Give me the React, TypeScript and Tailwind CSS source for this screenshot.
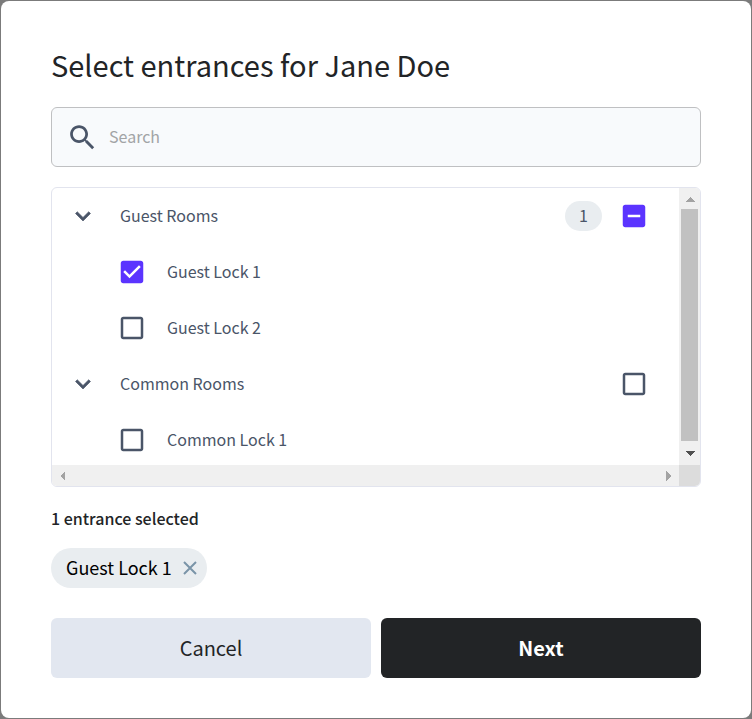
import React, { useState } from 'react';

interface Lock {
  id: string;
  name: string;
}

interface Group {
  id: string;
  name: string;
  locks: Lock[];
}

type CheckState = 'on' | 'off' | 'mixed';

const groups: Group[] = [
  {
    id: 'guest',
    name: 'Guest Rooms',
    locks: [
      { id: 'guest-1', name: 'Guest Lock 1' },
      { id: 'guest-2', name: 'Guest Lock 2' },
    ],
  },
  {
    id: 'common',
    name: 'Common Rooms',
    locks: [{ id: 'common-1', name: 'Common Lock 1' }],
  },
];

const checkPaths: Record<CheckState, string> = {
  on: 'M19 3H5c-1.11 0-2 .9-2 2v14c0 1.1.89 2 2 2h14c1.11 0 2-.9 2-2V5c0-1.1-.89-2-2-2zm-9 14l-5-5 1.41-1.41L10 14.17l7.59-7.59L19 8l-9 9z',
  off: 'M19 5v14H5V5h14m0-2H5c-1.1 0-2 .9-2 2v14c0 1.1.9 2 2 2h14c1.1 0 2-.9 2-2V5c0-1.1-.9-2-2-2z',
  mixed: 'M19 3H5c-1.1 0-2 .9-2 2v14c0 1.1.9 2 2 2h14c1.1 0 2-.9 2-2V5c0-1.1-.9-2-2-2zm-2 10H7v-2h10v2z',
};

const Checkbox: React.FC<{ id: string; label?: string; state: CheckState; onChange: () => void }> = ({ id, label, state, onChange }) => (
  <span className="relative block size-[30px] shrink-0">
    <input
      id={id}
      type="checkbox"
      aria-label={label}
      checked={state === 'on'}
      ref={el => {
        if (el) el.indeterminate = state === 'mixed';
      }}
      onChange={onChange}
      className="absolute inset-0 size-full cursor-pointer opacity-0"
    />
    <svg viewBox="0 0 24 24" className={state === 'off' ? 'pointer-events-none size-full fill-[#4a5568]' : 'pointer-events-none size-full fill-[#5b34ff]'}>
      <path d={checkPaths[state]} />
    </svg>
  </span>
);

const Arrow: React.FC<{ points: string; className: string }> = ({ points, className }) => (
  <svg viewBox="0 0 10 10" className={className} shapeRendering="crispEdges">
    <polygon points={points} />
  </svg>
);

const App: React.FC = () => {
  const [query, setQuery] = useState('');
  const [selected, setSelected] = useState<string[]>(['guest-1']);
  const [closed, setClosed] = useState<string[]>([]);

  const toggle = (list: string[], id: string) => (list.includes(id) ? list.filter(x => x !== id) : [...list, id]);

  const toggleGroup = (group: Group) => {
    const ids = group.locks.map(l => l.id);
    const rest = selected.filter(id => !ids.includes(id));
    setSelected(ids.every(id => selected.includes(id)) ? rest : [...rest, ...ids]);
  };

  const chips = groups.flatMap(g => g.locks).filter(l => selected.includes(l.id));

  return (
    <div className="min-h-screen bg-[#7b7b7b] p-px font-['Noto_Sans_CJK_SC','Noto_Sans',sans-serif] text-[#222426]">
      <main className="rounded-lg bg-white px-[50px] pt-10 pb-10">
        <h1 className="mb-5 text-[29px] leading-[46px]">Select entrances for Jane Doe</h1>

        <label className="mb-5 flex h-[60px] items-center gap-2.5 rounded-md border border-[#bfc0c2] bg-[#f8fafc] px-3.5">
          <svg viewBox="0 0 24 24" className="size-[33px] shrink-0 fill-[#4a5568]">
            <path d="M15.5 14h-.79l-.28-.27C15.41 12.59 16 11.11 16 9.5 16 5.91 13.09 3 9.5 3S3 5.91 3 9.5 5.91 16 9.5 16c1.61 0 3.09-.59 4.23-1.57l.27.28v.79l5 4.99L20.49 19l-4.99-5zm-6 0C7.01 14 5 11.99 5 9.5S7.01 5 9.5 5 14 7.01 14 9.5 11.99 14 9.5 14z" />
          </svg>
          <input
            type="text"
            aria-label="Search"
            placeholder="Search"
            value={query}
            onChange={e => setQuery(e.target.value)}
            className="h-full min-w-0 flex-1 bg-transparent pb-0.5 text-base outline-none placeholder:text-[#a2a4a6]"
          />
        </label>

        <section className="mb-5 grid h-[300px] grid-cols-[1fr_21px] grid-rows-[1fr_21px] overflow-hidden rounded-md border border-[#e2e4ee] text-base text-[#4a5568]">
          <ul className="min-h-0 overflow-hidden">
            {groups.map(group => {
              const count = group.locks.filter(l => selected.includes(l.id)).length;
              const state: CheckState = count === 0 ? 'off' : count === group.locks.length ? 'on' : 'mixed';
              const locks = group.locks.filter(l => l.name.toLowerCase().includes(query.toLowerCase()));
              return (
                <li key={group.id}>
                  <div className="flex h-14 items-center pr-[30px] pl-4">
                    <button type="button" aria-label={`Toggle ${group.name}`} onClick={() => setClosed(toggle(closed, group.id))} className="mr-[22px]">
                      <svg viewBox="0 0 24 24" className="size-[30px] fill-[#4a5568] stroke-[#4a5568] stroke-[0.5]">
                        <path d="M16.59 8.59L12 13.17 7.41 8.59 6 10l6 6 6-6z" />
                      </svg>
                    </button>
                    <span className="flex-1 pb-0.5">{group.name}</span>
                    {count > 0 && <span className="mr-[17px] w-[37px] rounded-full bg-[#e9edf0] pb-0.5 text-center leading-7">{count}</span>}
                    <Checkbox id={group.id} label={group.name} state={state} onChange={() => toggleGroup(group)} />
                  </div>
                  {!closed.includes(group.id) && locks.map(lock => (
                    <div key={lock.id} className="flex h-14 items-center gap-5 pl-[65px]">
                      <Checkbox id={lock.id} state={selected.includes(lock.id) ? 'on' : 'off'} onChange={() => setSelected(toggle(selected, lock.id))} />
                      <label htmlFor={lock.id} className="pb-0.5">{lock.name}</label>
                    </div>
                  ))}
                </li>
              );
            })}
          </ul>

          {/* vertical scrollbar */}
          <div className="flex flex-col items-center bg-[#f0f0f0]">
            <div className="flex h-[21px] items-center">
              <Arrow points="0,8 5,3 10,8" className="size-2.5 fill-[#a3a3a3]" />
            </div>
            <div className="w-[17px] flex-1 bg-[#c1c1c1]" />
            <div className="flex h-6 items-center">
              <Arrow points="0,3 5,8 10,3" className="size-2.5 fill-[#505050]" />
            </div>
          </div>

          {/* horizontal scrollbar */}
          <div className="flex items-center justify-between bg-[#f0f0f0] px-1.5">
            <Arrow points="7,0 2,5 7,10" className="size-2.5 fill-[#a3a3a3]" />
            <Arrow points="3,0 8,5 3,10" className="size-2.5 fill-[#a3a3a3]" />
          </div>
          <div className="bg-[#dcdcdc]" />
        </section>

        <p className="mb-[18px] text-base leading-[23px] font-medium">
          {chips.length} {chips.length === 1 ? 'entrance' : 'entrances'} selected
        </p>

        <div className="mb-[30px] flex min-h-10 flex-wrap gap-2">
          {chips.map(chip => (
            <span key={chip.id} className="flex h-10 items-center gap-[11px] rounded-full bg-[#e9edf0] pr-2.5 pl-[15px] text-lg text-black">
              <span className="pb-0.5">{chip.name}</span>
              <button type="button" aria-label={`Remove ${chip.name}`} onClick={() => setSelected(toggle(selected, chip.id))}>
                <svg viewBox="0 0 14 14" className="size-3.5 stroke-[#7a94a8] stroke-2">
                  <path d="M1 1l12 12M13 1L1 13" />
                </svg>
              </button>
            </span>
          ))}
        </div>

        <div className="grid grid-cols-2 gap-2.5 text-xl">
          <button type="button" className="h-[60px] rounded-md bg-[#e2e7f0]">Cancel</button>
          <button type="button" className="h-[60px] rounded-md bg-[#222426] font-bold text-white">Next</button>
        </div>
      </main>
    </div>
  );
};

export default App;
